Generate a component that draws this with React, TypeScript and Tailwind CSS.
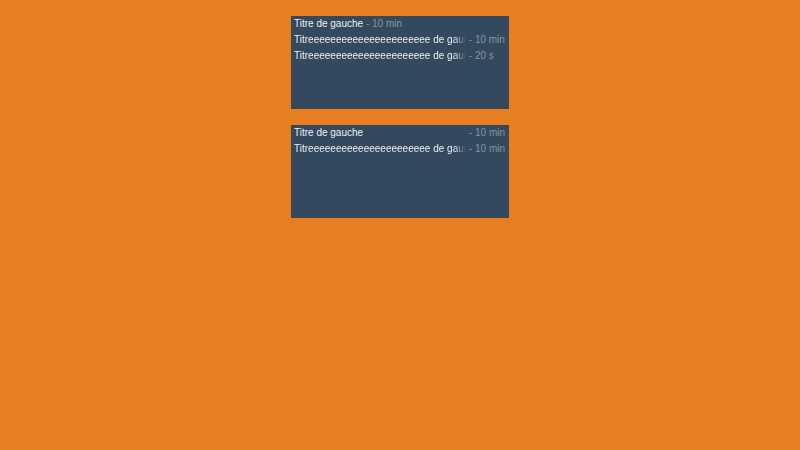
const LONG = "Titreeeeeeeeeeeeeeeeeeeeee de gauche";

type Row = { title: string; time: string; long?: boolean };

function Panel({ rows, alignRight }: { rows: Row[]; alignRight?: boolean }) {
  return (
    <div className="h-[93px] w-[218px] bg-[#34495e] pl-[3px] pr-[4px]">
      {rows.map((row, i) => (
        <div
          key={i}
          className={`flex h-4 items-center whitespace-nowrap ${alignRight ? "justify-between" : ""}`}
        >
          <span
            className={`max-w-[172px] overflow-hidden text-[#ecf0f1] ${
              row.long ? "[mask-image:linear-gradient(to_right,black_calc(100%-12px),transparent)]" : ""
            }`}
          >
            {row.title}
          </span>
          <span className="shrink-0 whitespace-pre text-[#8595a0]">{" - " + row.time}</span>
        </div>
      ))}
    </div>
  );
}

export default function App() {
  return (
    <div className="flex min-h-screen w-full flex-col items-center gap-4 bg-[#e67e22] pt-4 font-['Liberation_Sans',Arial,sans-serif] text-[10px] leading-4">
      <Panel
        rows={[
          { title: "Titre de gauche", time: "10 min" },
          { title: LONG, time: "10 min", long: true },
          { title: LONG, time: "20 s", long: true },
        ]}
      />
      <Panel
        alignRight
        rows={[
          { title: "Titre de gauche", time: "10 min" },
          { title: LONG, time: "10 min", long: true },
        ]}
      />
    </div>
  );
}
